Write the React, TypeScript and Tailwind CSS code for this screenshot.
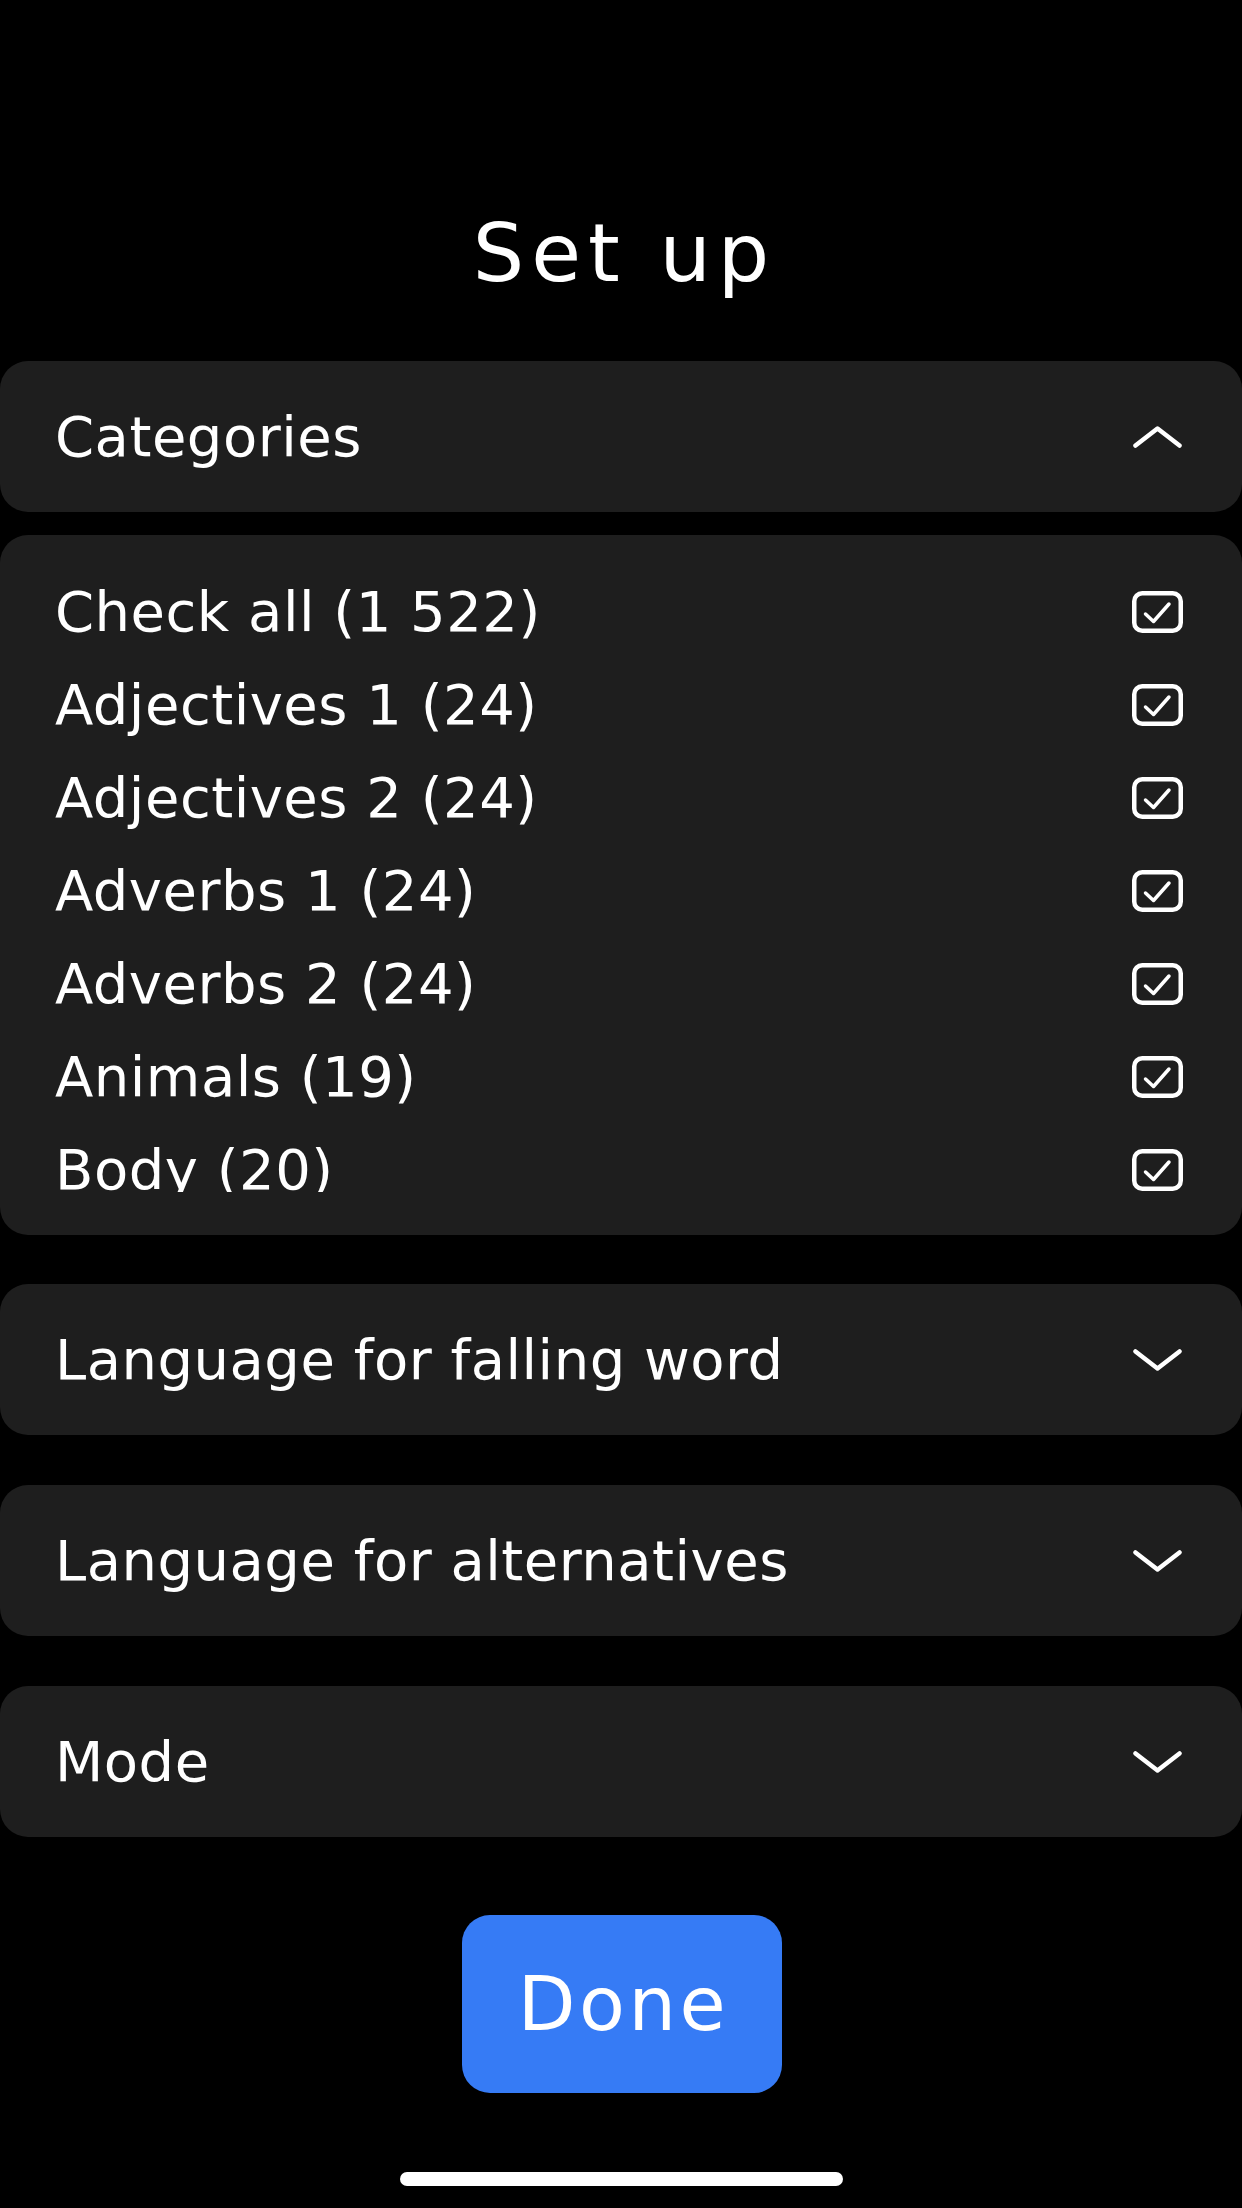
import React from 'react';

const categories = [
  'Check all (1 522)',
  'Adjectives 1 (24)',
  'Adjectives 2 (24)',
  'Adverbs 1 (24)',
  'Adverbs 2 (24)',
  'Animals (19)',
  'Body (20)',
];

const Chevron = ({ up = false }: { up?: boolean }) => (
  <svg width="49" height="22" viewBox="0 0 49 22" fill="none" className="shrink-0">
    <polyline
      points={up ? '2.5,19.5 24.5,2.5 46.5,19.5' : '2.5,2.5 24.5,19.5 46.5,2.5'}
      stroke="white"
      strokeWidth="4.5"
      strokeLinecap="round"
      strokeLinejoin="round"
    />
  </svg>
);

const CheckBox = () => (
  <svg width="51" height="42" viewBox="0 0 51 42" fill="none" className="shrink-0">
    <rect x="2.25" y="2.25" width="46.5" height="37.5" rx="8" stroke="white" strokeWidth="4.5" />
    <polyline
      points="13.5,23 21.5,30.5 37,13"
      stroke="white"
      strokeWidth="3.5"
      strokeLinecap="round"
      strokeLinejoin="round"
    />
  </svg>
);

const Section = ({ title, open = false }: { title: string; open?: boolean }) => (
  <div className="h-[151px] rounded-[28px] bg-[#1e1e1e] pl-[55px] pr-[60px] flex items-center justify-between">
    <span className="text-[56px] leading-none tracking-[0.5px]">{title}</span>
    <Chevron up={open} />
  </div>
);

export default function App() {
  return (
    <div
      className="w-[1242px] h-[2208px] bg-black text-white flex flex-col overflow-hidden"
      style={{ fontFamily: '"DejaVu Sans", "Liberation Sans", sans-serif' }}
    >
      {/* Title */}
      <h1 className="pt-[213px] h-[294px] text-center text-[81px] leading-none font-normal tracking-[7px] pl-[7px]">
        Set up
      </h1>

      <div className="mt-[67px] flex flex-col">
        <Section title="Categories" open />

        {/* Category list */}
        <div className="mt-[23px] rounded-[28px] bg-[#1e1e1e] pt-[30px] pb-[43px]">
          <div className="h-[627px] overflow-hidden">
            {categories.map((c) => (
              <div
                key={c}
                className="h-[93px] pl-[55px] pr-[59px] flex items-center justify-between"
              >
                <span className="text-[56px] leading-none tracking-[0.5px]">{c}</span>
                <CheckBox />
              </div>
            ))}
          </div>
        </div>

        <div className="mt-[49px]">
          <Section title="Language for falling word" />
        </div>
        <div className="mt-[50px]">
          <Section title="Language for alternatives" />
        </div>
        <div className="mt-[50px]">
          <Section title="Mode" />
        </div>
      </div>

      {/* Done */}
      <div className="mt-[78px] flex justify-center">
        <button className="w-[320px] h-[178px] ml-[2px] rounded-[28px] bg-[#367bf5] text-white text-[75px] leading-none tracking-[3.5px] pl-[3px] flex items-center justify-center">
          Done
        </button>
      </div>

      {/* Home indicator */}
      <div className="mt-[79px] flex justify-center">
        <div className="w-[443px] h-[14px] rounded-full bg-white" />
      </div>
    </div>
  );
}
